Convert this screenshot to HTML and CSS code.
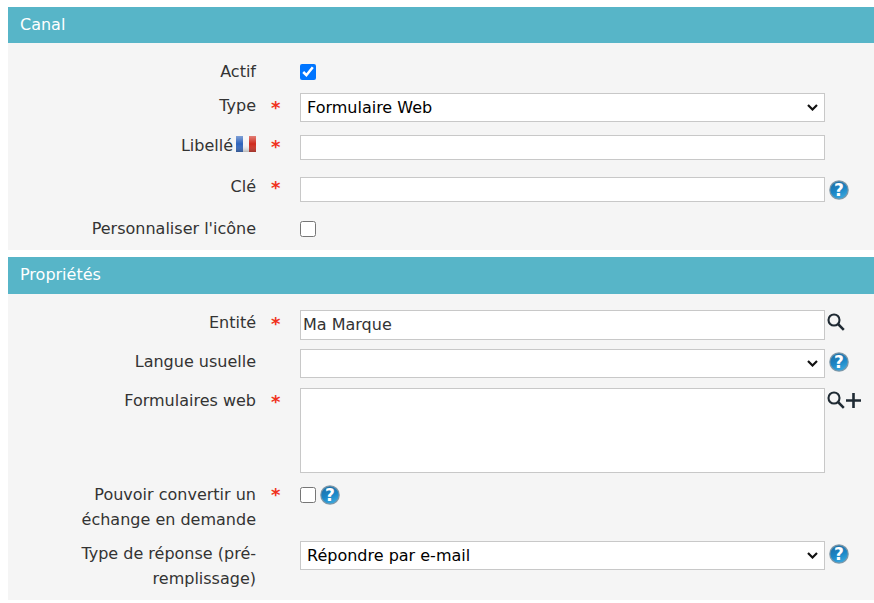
FILE: index.html
```html
<!DOCTYPE html>
<html lang="fr">
<head>
    <meta charset="UTF-8">
    <title>Canal</title>
    <link rel="stylesheet" href="styles.css">
</head>
<body>
    <svg class="defs" width="0" height="0">
        <defs>
            <linearGradient id="helpBg" x1="0.2" y1="0" x2="0.6" y2="1">
                <stop offset="0" stop-color="#1d6ea6"/>
                <stop offset="0.55" stop-color="#1b86c6"/>
                <stop offset="1" stop-color="#3aa6dc"/>
            </linearGradient>
            <symbol id="help" viewBox="0 0 20 20">
                <circle cx="10" cy="10" r="9.8" fill="#7d97a8"/>
                <circle cx="10" cy="10" r="8.6" fill="url(#helpBg)"/>
                <text x="10" y="16" text-anchor="middle" class="help-mark">?</text>
            </symbol>
            <symbol id="loupe" viewBox="0 0 18 18">
                <circle cx="7" cy="7" r="5.5" fill="none" stroke="#1f2a33" stroke-width="2.1"/>
                <path d="M11 11L16.8 16.8" stroke="#1f2a33" stroke-width="2.5"/>
            </symbol>
        </defs>
    </svg>

    <section class="block">
        <h2>Canal</h2>
        <div class="panel panel-canal">
            <div class="row row-actif">
                <label>Actif</label><span class="star"></span>
                <div class="field"><input type="checkbox" checked></div>
            </div>
            <div class="row row-type">
                <label>Type</label><span class="star">*</span>
                <div class="field"><select class="big"><option>Formulaire Web</option></select></div>
            </div>
            <div class="row row-libelle">
                <label>Libellé<svg class="flag" width="20" height="16" viewBox="0 0 20 16"><defs><linearGradient id="flagShade" x1="0" y1="0" x2="0" y2="1"><stop offset="0" stop-color="#fff" stop-opacity="0.4"/><stop offset="0.5" stop-color="#fff" stop-opacity="0"/><stop offset="1" stop-color="#444" stop-opacity="0.35"/></linearGradient></defs><rect width="7" height="16" fill="#2c62bb"/><rect x="7" width="6" height="16" fill="#f4f4f4"/><rect x="13" width="7" height="16" fill="#cf2a1c"/><rect width="20" height="16" fill="url(#flagShade)"/></svg></label><span class="star">*</span>
                <div class="field"><input type="text" class="small"></div>
            </div>
            <div class="row row-cle">
                <label>Clé</label><span class="star">*</span>
                <div class="field"><input type="text" class="small"><svg class="help"><use href="#help"/></svg></div>
            </div>
            <div class="row row-perso">
                <label>Personnaliser l'icône</label><span class="star"></span>
                <div class="field"><input type="checkbox"></div>
            </div>
        </div>
    </section>

    <section class="block">
        <h2 class="tall">Propriétés</h2>
        <div class="panel panel-props">
            <div class="row row-entite">
                <label>Entité</label><span class="star">*</span>
                <div class="field"><input type="text" class="mid" value="Ma Marque"><svg class="loupe"><use href="#loupe"/></svg></div>
            </div>
            <div class="row row-langue">
                <label>Langue usuelle</label><span class="star"></span>
                <div class="field"><select class="big"><option></option></select><svg class="help"><use href="#help"/></svg></div>
            </div>
            <div class="row row-forms">
                <label>Formulaires web</label><span class="star">*</span>
                <div class="field">
                    <textarea></textarea>
                    <svg class="loupe"><use href="#loupe"/></svg>
                    <svg class="plus" width="15" height="15" viewBox="0 0 15 15"><path d="M7.5 0V15M0 7.5H15" stroke="#1f2a33" stroke-width="2.6"/></svg>
                </div>
            </div>
            <div class="row row-convert">
                <label>Pouvoir convertir un échange en demande</label><span class="star">*</span>
                <div class="field"><input type="checkbox"><svg class="help"><use href="#help"/></svg></div>
            </div>
            <div class="row row-reponse">
                <label>Type de réponse (pré-remplissage)</label><span class="star"></span>
                <div class="field"><select class="big"><option>Répondre par e-mail</option></select><svg class="help"><use href="#help"/></svg></div>
            </div>
        </div>
    </section>
</body>
</html>
```

FILE: styles.css
```css
body {
    margin: 0;
    padding: 7px 0 0 8px;
    background: #fff;
    font-family: "DejaVu Sans", sans-serif;
    font-size: 16px;
    color: #333;
}
.defs {
    position: absolute;
}
.help-mark {
    font-family: "DejaVu Sans", sans-serif;
    font-size: 17px;
    font-weight: bold;
    fill: #fff;
}
.block {
    margin-bottom: 7px;
}
h2 {
    margin: 0;
    height: 36px;
    line-height: 35px;
    padding-left: 12px;
    background: #57b5c8;
    color: #fff;
    font-size: 16px;
    font-weight: normal;
}
h2.tall {
    height: 37px;
    line-height: 36px;
}
.panel {
    background: #f5f5f5;
}
.panel-canal {
    height: 207px;
    padding-top: 16px;
    box-sizing: border-box;
}
.panel-props {
    height: 306px;
    box-sizing: border-box;
    padding-top: 16px;
}
.row {
    display: grid;
    grid-template-columns: 248px 44px 1fr;
    line-height: 25px;
}
.row label {
    text-align: right;
}
.star {
    color: #f0321e;
    padding-left: 15px;
    font-size: 18px;
    font-weight: bold;
}
.field {
    display: flex;
    align-items: flex-start;
}
.big, .small, .mid, textarea {
    box-sizing: border-box;
    width: 525px;
    margin: 0;
    border: 1px solid #c8c8c8;
    background: #fff;
    font-family: "DejaVu Sans", sans-serif;
    font-size: 16px;
    color: #000;
}
.big {
    height: 29px;
    padding-left: 6px;
    appearance: none;
    background: #fff url("data:image/svg+xml,%3Csvg xmlns='http://www.w3.org/2000/svg' width='11' height='7' viewBox='0 0 11 7'%3E%3Cpath d='M1 1l4.5 4.5L10 1' fill='none' stroke='%23111' stroke-width='2.2'/%3E%3C/svg%3E") no-repeat right 6px center;
}
.small {
    height: 25px;
}
.mid {
    height: 30px;
    color: #333;
    padding: 0 0 2px 2px;
}
textarea {
    height: 85px;
    resize: none;
}
input[type="checkbox"] {
    width: 16px;
    height: 16px;
    margin: 5px 0 0;
}
.help {
    width: 20px;
    height: 20px;
    margin: 3px 0 0 4px;
}
.loupe {
    width: 18px;
    height: 18px;
    margin: 3px 0 0 2px;
}
.plus {
    margin: 5px 0 0 1px;
}
.flag {
    margin: -6px 0 0 3px;
    vertical-align: middle;
}
.row-actif {
    height: 34px;
}
.row-type {
    height: 42px;
}
.row-type .star {
    margin-top: 2px;
}
.row-libelle {
    height: 42px;
}
.row-libelle label {
    margin-top: -2px;
}
.row-libelle .star {
    margin-top: -1px;
}
.row-cle {
    height: 39px;
}
.row-cle label {
    margin-top: -3px;
}
.row-cle .star {
    margin-top: -2px;
}
.row-entite,
.row-langue {
    height: 39px;
}
.row-entite .star,
.row-forms .star {
    margin-top: 1px;
}
.row-forms {
    height: 94px;
}
.row-convert {
    height: 59px;
}
.row-convert label {
    padding-left: 60px;
}
```
